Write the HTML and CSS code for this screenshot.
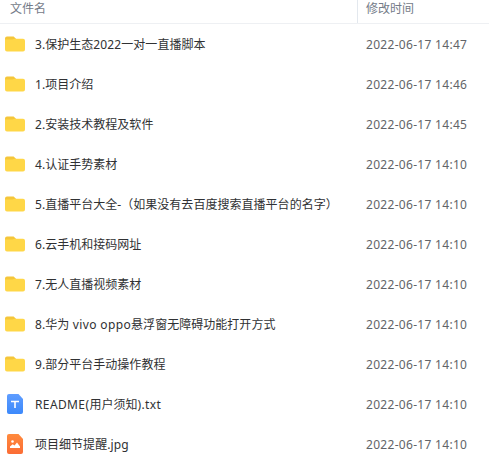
FILE: index.html
```html
<!DOCTYPE html>
<html lang="zh-CN">
<head>
<meta charset="utf-8">
<title>文件列表</title>
<link rel="stylesheet" href="styles.css">
</head>
<body>
<svg class="defs" width="0" height="0" aria-hidden="true">
  <defs>
    <linearGradient id="blue" x1="0" y1="0" x2="0" y2="1"><stop offset="0" stop-color="#5f9dff"/><stop offset="1" stop-color="#3c89fb"/></linearGradient>
    <linearGradient id="orange" x1="0" y1="0" x2="0" y2="1"><stop offset="0" stop-color="#ff8a3d"/><stop offset="1" stop-color="#fb6c35"/></linearGradient>
    <symbol id="folder" viewBox="0 0 20 16">
      <path fill="#f5c63a" d="M2 0.500h6.600l2.400 2.300v5H0V2.500a2 2 0 0 1 2-2z"/>
      <path fill="#ffd747" d="M0 3.400h7.300c1.200 0 1.700-.6 3-.6H18a2 2 0 0 1 2 2V13.500a2 2 0 0 1-2 2H2a2 2 0 0 1-2-2z"/>
    </symbol>
    <symbol id="text" viewBox="0 0 16 20">
      <path fill="url(#blue)" d="M2 0h9.500L16 5v13a2 2 0 0 1-2 2H2a2 2 0 0 1-2-2V2a2 2 0 0 1 2-2z"/>
      <path fill="none" stroke="#fff" stroke-width="1.600" d="M4 7.500h8M8 7.500v6.500"/>
    </symbol>
    <symbol id="image" viewBox="0 0 16 20">
      <path fill="url(#orange)" d="M2 0h9.500L16 5v13a2 2 0 0 1-2 2H2a2 2 0 0 1-2-2V2a2 2 0 0 1 2-2z"/>
      <circle cx="5.500" cy="7.500" r="1.300" fill="#fff"/>
      <path fill="#fff" d="M3 14v-1.500l2.700-2.200 1.800 1.200L10 8.500l3 4V14z"/>
    </symbol>
  </defs>
</svg>
<main class="files">
  <header class="head"><div class="head-name">文件名</div><div class="head-time">修改时间</div></header>
  <div class="row"><svg class="icon"><use href="#folder"/></svg><span class="name">3.保护生态<span class="digits">2022</span>一对一直播脚本</span><time class="time">2022-06-17 14:47</time></div>
  <div class="row"><svg class="icon"><use href="#folder"/></svg><span class="name">1.项目介绍</span><time class="time">2022-06-17 14:46</time></div>
  <div class="row"><svg class="icon"><use href="#folder"/></svg><span class="name">2.安装技术教程及软件</span><time class="time">2022-06-17 14:45</time></div>
  <div class="row"><svg class="icon"><use href="#folder"/></svg><span class="name">4.认证手势素材</span><time class="time">2022-06-17 14:10</time></div>
  <div class="row"><svg class="icon"><use href="#folder"/></svg><span class="name">5.直播平台大全-（如果没有去百度搜索直播平台的名字）</span><time class="time">2022-06-17 14:10</time></div>
  <div class="row"><svg class="icon"><use href="#folder"/></svg><span class="name">6.云手机和接码网址</span><time class="time">2022-06-17 14:10</time></div>
  <div class="row"><svg class="icon"><use href="#folder"/></svg><span class="name">7.无人直播视频素材</span><time class="time">2022-06-17 14:10</time></div>
  <div class="row"><svg class="icon"><use href="#folder"/></svg><span class="name">8.华为<span class="latin"> vivo oppo</span>悬浮窗无障碍功能打开方式</span><time class="time">2022-06-17 14:10</time></div>
  <div class="row"><svg class="icon"><use href="#folder"/></svg><span class="name">9.部分平台手动操作教程</span><time class="time">2022-06-17 14:10</time></div>
  <div class="row"><svg class="icon doc"><use href="#text"/></svg><span class="name"><span class="latin">README(</span>用户须知<span class="latin">).txt</span></span><time class="time">2022-06-17 14:10</time></div>
  <div class="row"><svg class="icon doc"><use href="#image"/></svg><span class="name">项目细节提醒<span class="digits">.jpg</span></span><time class="time">2022-06-17 14:10</time></div>
</main>
</body>
</html>
```
FILE: styles.css
```css
body {
  margin: 0;
  background: #fff;
  color: #303133;
  font: 12px/18px "Noto Sans", "Noto Sans CJK SC", sans-serif;
}

.defs {
  display: block;
}

.files {
  height: 466px;
  overflow: hidden;
}

.head,
.row {
  display: grid;
  box-sizing: border-box;
}

.head {
  grid-template-columns: 357px 1fr;
  height: 24px;
  border-bottom: 1px solid #eef0f3;
  color: #747b88;
}

.head-name {
  padding-left: 10px;
}

.head-time {
  border-left: 1px solid #e3e8ee;
  padding-left: 8px;
}

.row {
  grid-template-columns: 20px 321px 1fr;
  column-gap: 10px;
  align-items: center;
  height: 40px;
  padding: 1px 0 0 5px;
}

.icon {
  width: 20px;
  height: 16px;
  margin-bottom: 2px;
}

.doc {
  justify-self: center;
  width: 16px;
  height: 20px;
}

.name {
  white-space: nowrap;
  letter-spacing: 0.03px;
}

.latin {
  letter-spacing: 0.38px;
}

.digits {
  letter-spacing: 0.14px;
}

.time {
  color: #626468;
  letter-spacing: 0.3px;
}
```
